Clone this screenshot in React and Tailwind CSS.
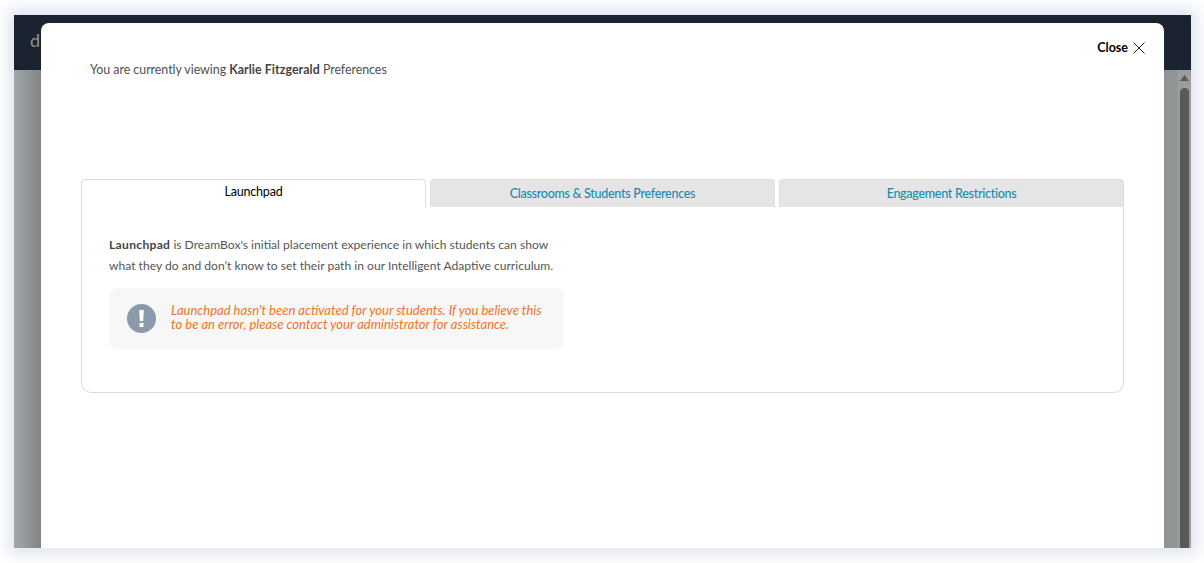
const font = { fontFamily: '"Lato", "Liberation Sans", sans-serif' };

function Tab({ children, active }) {
  if (active) {
    return (
      <div className="relative z-10 flex h-[29px] w-[345px] justify-center rounded-t-[4px] border border-b-0 border-[#dcdcdc] bg-white pt-[4px] text-[12.5px] leading-[16px] tracking-[-0.2px] text-black">
        {children}
      </div>
    );
  }
  return (
    <div className="flex h-[28px] flex-1 items-center justify-center rounded-t-[4px] border border-b-0 border-[#dedede] bg-[#e5e5e5] pt-[2px] text-[12.5px] font-medium tracking-[-0.28px] text-[#1a8cad]">
      {children}
    </div>
  );
}

export default function App() {
  return (
    <div style={font} className="h-[563px] w-[1204px] overflow-hidden bg-white px-[14px] pt-[15px]">
      <div className="relative flex h-[533px] w-[1177px] flex-col shadow-[0_0_14px_6px_rgba(196,206,226,0.55)]">
        <div className="flex h-[55px] items-center bg-[#1b2330] pb-[5px] pl-[16px] text-[18px] text-[#8d9196]">d</div>
        <div className="flex flex-1 justify-end bg-[linear-gradient(90deg,#a3a8a9_0px,#808485_27px,#8f9496_1150px)]">
          <div className="flex w-[14px] flex-col items-center bg-[#9c9c9c] pl-[3px] pr-[2px]">
            <svg width="9" height="6" viewBox="0 0 9 6" className="mt-[5px] shrink-0"><path d="M4.5 0 9 6H0z" fill="#5a5a5a" /></svg>
            <div className="mt-[7px] w-[9px] flex-1 rounded-t-[5px] bg-[#595959]" />
          </div>
        </div>
        <div className="absolute bottom-0 left-[27px] top-[8px] w-[1123px] rounded-t-[8px] bg-white text-[#4f4f4f]">
          <div className="flex justify-end pr-[19px] pt-[16px]">
            <div className="flex items-center gap-[5px] text-[12.5px] leading-[18px] font-bold text-black">
              Close
              <svg width="12" height="12" viewBox="0 0 12 12" fill="none" stroke="#222" strokeWidth="1"><path d="M.5.5l11 11M11.5.5l-11 11" /></svg>
            </div>
          </div>
          <p className="ml-[49px] mt-[5px] text-[12.4px] leading-[16px] tracking-[-0.03px]">
            You are currently viewing <b className="font-bold tracking-[0.05px] text-[#444]">Karlie Fitzgerald</b> Preferences
          </p>
          <div className="ml-[40px] mt-[101px] w-[1043px]">
            <div className="flex gap-[4px]">
              <Tab active>Launchpad</Tab>
              <Tab>Classrooms &amp; Students Preferences</Tab>
              <Tab>Engagement Restrictions</Tab>
            </div>
            <div className="-mt-px h-[186px] rounded-b-[10px] border border-t-0 border-[#dcdcdc] pl-[27px] pt-[27px]">
              <p className="text-[12.1px] leading-[21px] text-[#555]">
                <b className="font-bold tracking-[0.3px] text-[#444]">Launchpad</b> is DreamBox's initial placement experience in which students can show
                <br />
                what they do and don’t know to set their path in our Intelligent Adaptive curriculum.
              </p>
              <div className="mt-[12px] flex h-[61px] w-[455px] items-center gap-[15px] rounded-[8px] bg-[#f7f7f7] pl-[18px]">
                <svg width="29" height="29" viewBox="0 0 29 29" className="shrink-0">
                  <circle cx="14.5" cy="14.5" r="14.5" fill="#8a9aaa" />
                  <path d="M12.2 6h4.6l-.7 11h-3.2z" fill="#fff" />
                  <rect x="12.5" y="19" width="4" height="4" fill="#fff" />
                </svg>
                <p className="pb-[4px] text-[13px] leading-[14px] italic text-[#ee7526]">
                  Launchpad hasn't been activated for your students. If you believe this
                  <br />
                  to be an error, please contact your administrator for assistance.
                </p>
              </div>
            </div>
          </div>
        </div>
      </div>
    </div>
  );
}
